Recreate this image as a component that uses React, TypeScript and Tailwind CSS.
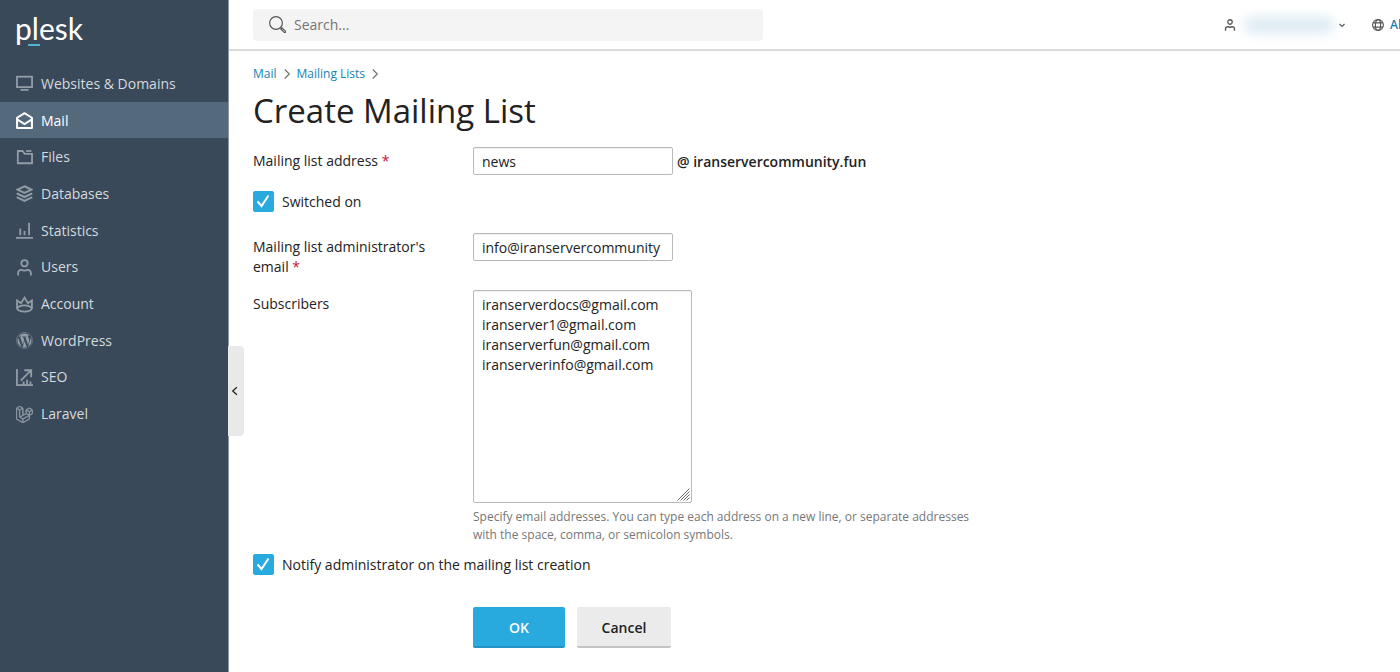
import type { ReactNode } from 'react';
import { FaLaravel, FaWordpress } from 'react-icons/fa';

function Icon({ children, className = 'size-[17px]', stroke = 1.7 }: { children: ReactNode; className?: string; stroke?: number }) {
  return (
    <svg viewBox="0 0 16 16" fill="none" stroke="currentColor" strokeWidth={stroke} className={className} aria-hidden="true">
      {children}
    </svg>
  );
}

const person = (
  <>
    <circle cx="8" cy="4" r="3" />
    <path d="M2 15.500v-2A3.300 3.300 0 0 1 5.200 10.200q1.200.8 2.800.8t2.800-.8A3.300 3.300 0 0 1 14 13.500v2" />
  </>
);

const menu: { label: string; icon: ReactNode; active?: boolean }[] = [
  {
    label: 'Websites & Domains',
    icon: (
      <Icon>
        <rect x="0.900" y="1.600" width="14.200" height="9.800" />
        <path d="M4.200 14h7.600" />
      </Icon>
    ),
  },
  {
    label: 'Mail',
    active: true,
    icon: (
      <Icon stroke={1.9}>
        <path d="M1 5.400 8 1.100l7 4.300V15H1z" strokeLinejoin="round" />
        <path d="M1 7l7 4.400L15 7" />
      </Icon>
    ),
  },
  {
    label: 'Files',
    icon: (
      <Icon>
        <path d="M1.700 1.900h4.500l2 2.600h6.900v8.900H1.700z" />
        <path d="M9.500 1.900h5" />
      </Icon>
    ),
  },
  {
    label: 'Databases',
    icon: (
      <Icon stroke={1.9}>
        <path d="M8 1.200 14.600 4.300 8 7.400 1.400 4.300z" />
        <path d="M.7 7.800 8 11.300l7.300-3.500M.7 11.400 8 14.900l7.300-3.500" />
      </Icon>
    ),
  },
  {
    label: 'Statistics',
    icon: (
      <Icon>
        <path d="M0 15h16M4 12.500V6.200M8 12.500V8.500M12.300 12.500V.8" />
      </Icon>
    ),
  },
  { label: 'Users', icon: <Icon>{person}</Icon> },
  {
    label: 'Account',
    icon: (
      <Icon>
        <path d="M1 12.300V4.200l3.700 2.500L8 1.500l3.300 5.200L15 4.200v8.100" />
        <ellipse cx="8" cy="11.800" rx="6.800" ry="2.900" />
      </Icon>
    ),
  },
  { label: 'WordPress', icon: <FaWordpress className="size-[17px]" aria-hidden="true" /> },
  {
    label: 'SEO',
    icon: (
      <Icon>
        <path d="M.9 0v15.100H16M4.500 11 13.800 1.600M7.800 1.200h6.500v6.500M7.200 15v-3.300M10.400 15v-5M13.600 15v-3.300" />
      </Icon>
    ),
  },
  { label: 'Laravel', icon: <FaLaravel className="size-[17px]" stroke="currentColor" strokeWidth={20} aria-hidden="true" /> },
];

function Sidebar() {
  return (
    <aside className="relative w-[229px] shrink-0 border-r border-[#8b97a3] bg-[#394959]">
      <a href="#home" aria-label="plesk" className="ml-[15px] flex h-[65px] w-[70px] flex-col pt-3 text-white">
        <span className="font-['Lato',sans-serif] text-[30px] leading-8">plesk</span>
        <span className="ml-[13px] h-[2px] w-3 bg-[#4fb4d4]" />
      </a>
      <nav>
        <ul className="grid h-[367px] auto-rows-fr">
          {menu.map(({ label, icon, active }) => (
            <li key={label} className="flex">
              <a
                href={`#${label}`}
                className={
                  active
                    ? 'flex grow items-center gap-2 bg-[#54697c] pt-px pl-4 text-white'
                    : 'flex grow items-center gap-2 pt-px pl-4 text-[#d5dade]'
                }
              >
                <span className={active ? 'text-white' : 'text-[#929ca7]'}>{icon}</span>
                {label}
              </a>
            </li>
          ))}
        </ul>
      </nav>
      <button
        type="button"
        aria-label="Collapse sidebar"
        className="absolute top-[346px] left-full flex h-[90px] w-4 items-center justify-center rounded-r bg-[#e9e9e9] pr-0.5 text-[#222]"
      >
        <Icon className="size-3 shrink-0">
          <path d="M10.500 3 5 8l5.500 5" />
        </Icon>
      </button>
    </aside>
  );
}

function Header() {
  return (
    <header className="flex h-[51px] items-center overflow-hidden border-b-2 border-[#dadada] pl-6">
      <label className="flex h-8 w-[510px] items-center gap-2 rounded bg-[#f4f4f4] pl-4 text-[#555]">
        <Icon className="size-[17px] shrink-0" stroke={1.1}>
          <circle cx="6.600" cy="6.600" r="6" />
          <path d="m10.800 10.800 1 1M11.300 12.400l1.100-1.100 3 3q.5.6 0 1.100t-1.100 0z" />
        </Icon>
        <input type="search" aria-label="Search" placeholder="Search..." className="grow bg-transparent outline-none placeholder:text-[#757575]" />
      </label>
      <div className="ml-auto flex items-center">
        <button type="button" aria-label="User menu" className="flex items-center text-[#555]">
          <Icon className="size-3">{person}</Icon>
          <span className="mr-1 ml-2 h-4 w-[90px] rounded-lg bg-[#dcebf2] blur-[6px]" />
          <Icon className="size-2" stroke={2.400}>
            <path d="M3 6l5 5 5-5" />
          </Icon>
        </button>
        <a href="#subscriptions" className="ml-[26px] flex w-7 items-center gap-[6px] text-[12px] font-semibold text-[#1682ab]">
          <Icon className="size-3 shrink-0 text-[#555]" stroke={1.500}>
            <circle cx="8" cy="8" r="7.200" />
            <ellipse cx="8" cy="8" rx="3.500" ry="7.200" />
            <path d="M1.500 5.200h13M1.500 10.800h13" />
          </Icon>
          Al
        </a>
      </div>
    </header>
  );
}

function Crumb({ children }: { children: string }) {
  return (
    <li className="flex items-center gap-1">
      <a href={`#${children}`} className="text-[#1285b0]">
        {children}
      </a>
      <Icon className="size-3 text-[#777]">
        <path d="m5 2 6 6-6 6" />
      </Icon>
    </li>
  );
}

function Checkbox({ id, label }: { id: string; label: string }) {
  return (
    <div className="flex items-center gap-2">
      <span className="grid size-[21px]">
        <input id={id} type="checkbox" defaultChecked className="peer col-start-1 row-start-1 size-[21px] appearance-none rounded-xs border border-[#28aade] bg-white checked:bg-[#28aade]" />
        <svg viewBox="0 0 21 21" fill="none" stroke="#fff" strokeWidth="2" className="pointer-events-none invisible col-start-1 row-start-1 size-[21px] peer-checked:visible" aria-hidden="true">
          <path d="m4.500 10.500 4 4.500 7-10.500" />
        </svg>
      </span>
      <label htmlFor={id}>{label}</label>
    </div>
  );
}

function FieldLabel({ htmlFor, children, required }: { htmlFor: string; children: string; required?: boolean }) {
  const lastWord = children.lastIndexOf(' ') + 1;
  return (
    <label htmlFor={htmlFor} className="w-[220px] shrink-0 pt-1 pr-10 leading-5">
      {children.slice(0, lastWord)}
      <span className="inline-block">
        {children.slice(lastWord)}
        {required && <span className="text-[#c8103c]"> *</span>}
      </span>
    </label>
  );
}

const box = 'rounded-xs border border-[#b9b9b9] bg-white px-2 shadow-[inset_0_1px_1px_#f0f0f0] outline-none';

export default function App() {
  return (
    <div className="flex min-h-screen bg-white font-['Open_Sans',sans-serif] text-[14px] leading-5 text-[#222]">
      <Sidebar />
      <div className="min-w-0 grow">
        <Header />
        <main className="px-6 pt-[13px]">
          <nav aria-label="Breadcrumb">
            <ol className="flex gap-1 text-[12px] leading-5">
              <Crumb>Mail</Crumb>
              <Crumb>Mailing Lists</Crumb>
            </ol>
          </nav>
          <h1 className="mt-[7px] text-[33px] leading-10">Create Mailing List</h1>
          <form className="mt-4">
            <div className="flex">
              <FieldLabel htmlFor="address" required>Mailing list address</FieldLabel>
              <input id="address" defaultValue="news" className={`${box} h-7 w-[200px]`} />
              <span className="pt-[5px] pl-1 font-semibold">@ iranservercommunity.fun</span>
            </div>
            <div className="mt-4">
              <Checkbox id="enabled" label="Switched on" />
            </div>
            <div className="mt-[21px] flex">
              <FieldLabel htmlFor="admin" required>Mailing list administrator's email</FieldLabel>
              <input id="admin" defaultValue="info@iranservercommunity" className={`${box} h-7 w-[200px]`} />
            </div>
            <div className="mt-[13px] flex">
              <FieldLabel htmlFor="subscribers">Subscribers</FieldLabel>
              <div>
                <div className="relative w-[219px]">
                  <textarea
                    id="subscribers"
                    defaultValue={'iranserverdocs@gmail.com\niranserver1@gmail.com\niranserverfun@gmail.com\niranserverinfo@gmail.com'}
                    className={`${box} block h-[213px] w-full resize-none py-1 leading-5`}
                  />
                  <svg viewBox="0 0 13 13" stroke="#666" className="pointer-events-none absolute right-[2px] bottom-[2px] size-[13px]" aria-hidden="true">
                    <path d="M.5 12.500l12-12M3.500 12.500l9-9M6.500 12.500l6-6M9.500 12.500l3-3" />
                  </svg>
                </div>
                <p className="mt-[5px] max-w-[520px] text-[12px] leading-[18px] text-[#777]">
                  Specify email addresses. You can type each address on a new line, or separate addresses with the space, comma, or semicolon symbols.
                </p>
              </div>
            </div>
            <div className="mt-[10px]">
              <Checkbox id="notify" label="Notify administrator on the mailing list creation" />
            </div>
            <div className="mt-8 flex gap-3 pl-[220px] font-semibold">
              <button type="submit" className="h-[41px] w-[92px] rounded-xs border-b-2 border-[#2492c2] bg-[#28aade] pt-0.5 text-white">OK</button>
              <button type="button" className="h-[41px] w-[94px] rounded-xs border-b-2 border-[#c4c4c4] bg-[#ebebeb] pt-0.5">Cancel</button>
            </div>
          </form>
        </main>
      </div>
    </div>
  );
}
